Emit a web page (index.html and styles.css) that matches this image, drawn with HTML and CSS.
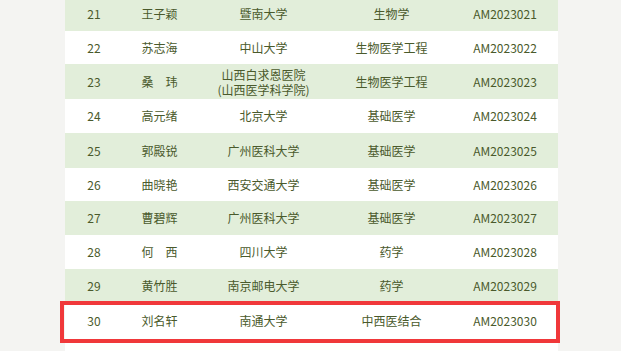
FILE: index.html
```html
<!DOCTYPE html>
<html lang="zh">
<head>
<meta charset="utf-8">
<link rel="stylesheet" href="styles.css">
</head>
<body>
<div class="page">
  <div class="table-wrap">
    <table class="list">
      <colgroup>
        <col class="c1"><col class="c2"><col class="c3"><col class="c4"><col class="c5">
      </colgroup>
      <tbody>
        <tr class="g"><td>21</td><td>王子颖</td><td>暨南大学</td><td>生物学</td><td>AM2023021</td></tr>
        <tr class="h33"><td>22</td><td>苏志海</td><td>中山大学</td><td>生物医学工程</td><td>AM2023022</td></tr>
        <tr class="g h35"><td>23</td><td>桑　玮</td><td class="two"><span class="ln">山西白求恩医院</span><span class="ln">(山西医学科学院)</span></td><td>生物医学工程</td><td>AM2023023</td></tr>
        <tr><td>24</td><td>高元绪</td><td>北京大学</td><td>基础医学</td><td>AM2023024</td></tr>
        <tr class="g h35"><td>25</td><td>郭殿锐</td><td>广州医科大学</td><td>基础医学</td><td>AM2023025</td></tr>
        <tr class="h33"><td>26</td><td>曲晓艳</td><td>西安交通大学</td><td>基础医学</td><td>AM2023026</td></tr>
        <tr class="g"><td>27</td><td>曹碧辉</td><td>广州医科大学</td><td>基础医学</td><td>AM2023027</td></tr>
        <tr><td>28</td><td>何　西</td><td>四川大学</td><td>药学</td><td>AM2023028</td></tr>
        <tr class="g h33"><td>29</td><td>黄竹胜</td><td>南京邮电大学</td><td>药学</td><td>AM2023029</td></tr>
        <tr class="last"><td>30</td><td>刘名轩</td><td>南通大学</td><td>中西医结合</td><td>AM2023030</td></tr>
      </tbody>
    </table>
    <div class="highlight"></div>
  </div>
</div>
</body>
</html>
```
FILE: styles.css
```css
html, body {
  margin: 0;
  padding: 0;
}
body {
  background: #f4f4f2;
  font-family: "Noto Sans CJK SC", "Noto Sans", sans-serif;
  color: #4a5a2c;
  overflow: hidden;
  height: 351px;
}
.page {
  padding-left: 65px;
}
.table-wrap {
  position: relative;
  width: 493px;
  margin-top: -3px;
  padding-bottom: 12px;
  background: #ffffff;
}
.list {
  width: 493px;
  table-layout: fixed;
  border-collapse: collapse;
  background: #ffffff;
  font-size: 12px;
}
.c1 { width: 58px; }
.c2 { width: 73px; }
.c3 { width: 135px; }
.c4 { width: 121px; }
.c5 { width: 106px; }
.list td {
  height: 34px;
  padding: 0;
  text-align: center;
  vertical-align: middle;
  line-height: 16px;
  white-space: nowrap;
}
.list tr.g td {
  background: #e2eeda;
}
.list tr.h33 td {
  height: 33px;
}
.list tr.h35 td {
  height: 35px;
}
.list td.two .ln {
  display: block;
  line-height: 15px;
  height: 15px;
}
.list tr.last td {
  height: 38px;
}
.highlight {
  position: absolute;
  left: -5px;
  right: -2px;
  top: 304px;
  height: 42px;
  border: 4px solid #f0383a;
  box-sizing: border-box;
}
```
